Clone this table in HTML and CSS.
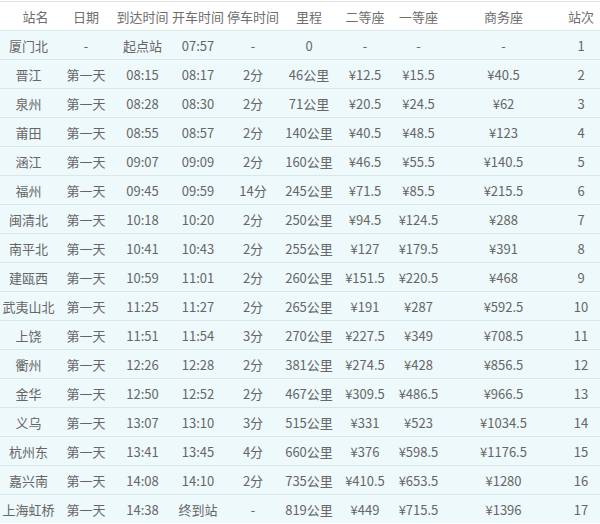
FILE: index.html
```html
<!DOCTYPE html>
<html lang="zh-CN">
<head>
<meta charset="utf-8">
<title>时刻表</title>
<link rel="stylesheet" href="styles.css">
</head>
<body>
<div class="wrap">
<table class="tt">
<colgroup>
<col class="c1"><col class="c2"><col class="c3"><col class="c4"><col class="c5"><col class="c6"><col class="c7"><col class="c8"><col class="c9"><col class="c10">
</colgroup>
<thead>
<tr><th class="first">站名</th><th>日期</th><th>到达时间</th><th>开车时间</th><th>停车时间</th><th>里程</th><th>二等座</th><th>一等座</th><th>商务座</th><th>站次</th></tr>
</thead>
<tbody>
<tr><td>厦门北</td><td>-</td><td>起点站</td><td>07:57</td><td>-</td><td>0</td><td>-</td><td>-</td><td>-</td><td>1</td></tr>
<tr><td>晋江</td><td>第一天</td><td>08:15</td><td>08:17</td><td>2分</td><td>46公里</td><td>¥12.5</td><td>¥15.5</td><td>¥40.5</td><td>2</td></tr>
<tr><td>泉州</td><td>第一天</td><td>08:28</td><td>08:30</td><td>2分</td><td>71公里</td><td>¥20.5</td><td>¥24.5</td><td>¥62</td><td>3</td></tr>
<tr><td>莆田</td><td>第一天</td><td>08:55</td><td>08:57</td><td>2分</td><td>140公里</td><td>¥40.5</td><td>¥48.5</td><td>¥123</td><td>4</td></tr>
<tr><td>涵江</td><td>第一天</td><td>09:07</td><td>09:09</td><td>2分</td><td>160公里</td><td>¥46.5</td><td>¥55.5</td><td>¥140.5</td><td>5</td></tr>
<tr><td>福州</td><td>第一天</td><td>09:45</td><td>09:59</td><td>14分</td><td>245公里</td><td>¥71.5</td><td>¥85.5</td><td>¥215.5</td><td>6</td></tr>
<tr><td>闽清北</td><td>第一天</td><td>10:18</td><td>10:20</td><td>2分</td><td>250公里</td><td>¥94.5</td><td>¥124.5</td><td>¥288</td><td>7</td></tr>
<tr><td>南平北</td><td>第一天</td><td>10:41</td><td>10:43</td><td>2分</td><td>255公里</td><td>¥127</td><td>¥179.5</td><td>¥391</td><td>8</td></tr>
<tr><td>建瓯西</td><td>第一天</td><td>10:59</td><td>11:01</td><td>2分</td><td>260公里</td><td>¥151.5</td><td>¥220.5</td><td>¥468</td><td>9</td></tr>
<tr><td>武夷山北</td><td>第一天</td><td>11:25</td><td>11:27</td><td>2分</td><td>265公里</td><td>¥191</td><td>¥287</td><td>¥592.5</td><td>10</td></tr>
<tr><td>上饶</td><td>第一天</td><td>11:51</td><td>11:54</td><td>3分</td><td>270公里</td><td>¥227.5</td><td>¥349</td><td>¥708.5</td><td>11</td></tr>
<tr><td>衢州</td><td>第一天</td><td>12:26</td><td>12:28</td><td>2分</td><td>381公里</td><td>¥274.5</td><td>¥428</td><td>¥856.5</td><td>12</td></tr>
<tr><td>金华</td><td>第一天</td><td>12:50</td><td>12:52</td><td>2分</td><td>467公里</td><td>¥309.5</td><td>¥486.5</td><td>¥966.5</td><td>13</td></tr>
<tr><td>义乌</td><td>第一天</td><td>13:07</td><td>13:10</td><td>3分</td><td>515公里</td><td>¥331</td><td>¥523</td><td>¥1034.5</td><td>14</td></tr>
<tr><td>杭州东</td><td>第一天</td><td>13:41</td><td>13:45</td><td>4分</td><td>660公里</td><td>¥376</td><td>¥598.5</td><td>¥1176.5</td><td>15</td></tr>
<tr><td>嘉兴南</td><td>第一天</td><td>14:08</td><td>14:10</td><td>2分</td><td>735公里</td><td>¥410.5</td><td>¥653.5</td><td>¥1280</td><td>16</td></tr>
<tr><td>上海虹桥</td><td>第一天</td><td>14:38</td><td>终到站</td><td>-</td><td>819公里</td><td>¥449</td><td>¥715.5</td><td>¥1396</td><td>17</td></tr>
</tbody>
</table>
</div>
</body>
</html>
```
FILE: styles.css
```css
html, body {
  margin: 0;
  padding: 0;
  background: #ffffff;
}
.wrap {
  width: 600px;
  height: 524px;
  overflow: hidden;
  padding-top: 1px;
  box-sizing: border-box;
}
.tt {
  width: 600px;
  border-collapse: collapse;
  table-layout: fixed;
  font-family: "Noto Sans CJK SC", "Microsoft YaHei", sans-serif;
  font-size: 13px;
  color: #666666;
  border-top: 1px solid #e2e2e2;
}
.c1 { width: 57px; }
.c2 { width: 58px; }
.c3 { width: 55px; }
.c4 { width: 56px; }
.c5 { width: 54px; }
.c6 { width: 58px; }
.c7 { width: 54px; }
.c8 { width: 53px; }
.c9 { width: 117px; }
.c10 { width: 38px; }
.tt th {
  height: 28px;
  padding: 0;
  font-weight: normal;
  text-align: center;
  color: #6e6e6e;
  background: #ffffff;
  white-space: nowrap;
}
.tt th.first {
  padding-left: 14px;
}
.tt td {
  height: 28px;
  padding: 0;
  text-align: center;
  white-space: nowrap;
  background: #eef9fb;
  border-top: 1px solid #dbe6e9;
}
```
